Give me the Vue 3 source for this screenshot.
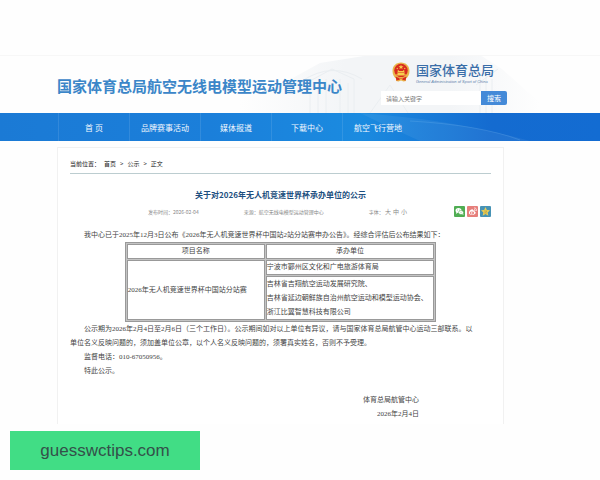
<script setup>
import { ref } from "vue";

const keyword = ref("");

const navItems = ["首 页", "品牌赛事活动", "媒体报道", "下载中心", "航空飞行营地"];
const fontSizes = ["大", "中", "小"];
const organizers = [
    "吉林省吉翔航空运动发展研究院、",
    "吉林省延边朝鲜族自治州航空运动和模型运动协会、",
    "浙江比翼智慧科技有限公司",
];
</script>

<template>
    <div class="page">
        <header class="site-header">
            <svg class="skyline" viewBox="0 0 300 58" preserveAspectRatio="xMidYMax slice" aria-hidden="true">
                <defs>
                    <linearGradient id="haze" x1="0" x2="1">
                        <stop offset="0" stop-color="#f3f5f7" stop-opacity="0" />
                        <stop offset="0.35" stop-color="#f3f5f7" />
                        <stop offset="0.7" stop-color="#f3f5f7" />
                        <stop offset="1" stop-color="#f3f5f7" stop-opacity="0" />
                    </linearGradient>
                </defs>
                <path fill="url(#haze)" d="M0 58V44L40 30 80 8 130 0 240 0 262 14 300 48V58Z" />
                <path fill="none" stroke="#eaeef1" stroke-width="1"
                    d="M70 58V26L92 14 114 24V58M78 58V30M86 58V24M100 58V24M108 58V28M62 26Q92 6 122 24M130 58L150 30 168 58M240 58V22M246 58V18M252 58V24M236 30L258 14" />
            </svg>
            <h1>国家体育总局航空无线电模型运动管理中心</h1>
            <div class="header-side">
                <a class="brand" href="#">
                    <svg class="emblem" viewBox="0 0 36 40" aria-hidden="true">
                        <path fill="#e9b64c" d="M18 1C28 1 35 8 35 18 35 25 32 30 28 33V38L23 39 18 37 13 39 8 38V33C4 30 1 25 1 18 1 8 8 1 18 1Z" />
                        <circle cx="18" cy="17" r="13.5" fill="#d92b1f" />
                        <path fill="#f6cf4e" d="M18 5L19.3 8.6H23L20 10.8 21.1 14.4 18 12.2 14.9 14.4 16 10.8 13 8.6H16.7Z" />
                        <g fill="#f6cf4e">
                            <circle cx="10.5" cy="13" r="1.3" />
                            <circle cx="25.5" cy="13" r="1.3" />
                            <circle cx="12.5" cy="17" r="1.2" />
                            <circle cx="23.5" cy="17" r="1.2" />
                            <path d="M10 21L12 18H24L26 21ZM11 22H25V25H28V27H8V25H11Z" />
                        </g>
                        <path fill="#d92b1f" d="M7 29Q18 35 29 29L27 37 22 36 18 34 14 36 9 37Z" />
                        <circle cx="18" cy="33" r="3" fill="#f0bd49" />
                        <circle cx="18" cy="33" r="1.2" fill="#d92b1f" />
                    </svg>
                    <span class="brand-text">
                        <span class="brand-name">国家体育总局</span>
                        <span class="brand-sub">General Administration of Sport of China</span>
                    </span>
                </a>
                <form class="search" @submit.prevent>
                    <input v-model="keyword" type="text" placeholder="请输入关键字" aria-label="请输入关键字" />
                    <button type="submit">搜索</button>
                </form>
            </div>
        </header>

        <nav class="main-nav">
            <svg class="nav-waves" viewBox="0 0 300 28" preserveAspectRatio="none" aria-hidden="true">
                <path fill="#ffffff" fill-opacity="0.06" d="M60 0Q150 6 230 28H120Q80 10 60 0Z" />
                <path fill="none" stroke="#8cc8f5" stroke-opacity="0.2" d="M110 8Q180 12 220 27" />
            </svg>
            <a v-for="item in navItems" :key="item" href="#">{{ item }}</a>
        </nav>

        <main class="article">
            <div class="breadcrumb">
                <span>当前位置：</span>
                <a href="#">首页</a>
                <span>&gt;</span>
                <a href="#">公示</a>
                <span>&gt;</span>
                <span>正文</span>
            </div>

            <h2>关于对2026年无人机竞速世界杯承办单位的公示</h2>

            <div class="meta">
                <span>发布时间：2026-02-04</span>
                <span>来源：航空无线电模型运动管理中心</span>
                <span class="sizes">
                    字体：
                    <button v-for="size in fontSizes" :key="size" type="button">{{ size }}</button>
                </span>
                <span class="share">
                    <button type="button" class="wechat" aria-label="微信">
                        <svg viewBox="0 0 22 22">
                            <ellipse cx="9" cy="9" rx="6" ry="5" fill="#fff" />
                            <path fill="#fff" d="M5 12L4 16 8 13Z" />
                            <ellipse cx="14" cy="13" rx="5" ry="4" fill="#fff" stroke="#50ad53" />
                            <path fill="#fff" d="M16 16L19 18 18 14Z" />
                            <g fill="#50ad53">
                                <circle cx="7" cy="8" r="0.9" />
                                <circle cx="11" cy="8" r="0.9" />
                                <circle cx="12.5" cy="12.5" r="0.7" />
                                <circle cx="15.5" cy="12.5" r="0.7" />
                            </g>
                        </svg>
                    </button>
                    <button type="button" class="weibo" aria-label="微博">
                        <svg viewBox="0 0 22 22">
                            <path fill="#fff" d="M9 7C11 6 12 7 12 9 15 8 16 9 15 11 18 12 18 14 16 16 12 19 5 18 4 15 3 12 6 8 9 7Z" />
                            <ellipse cx="10" cy="14" rx="4.2" ry="2.8" fill="#e67f7b" />
                            <circle cx="9.5" cy="14" r="1.6" fill="#fff" />
                            <path fill="none" stroke="#fff" stroke-width="1.4" d="M14 4C17 3 20 6 18.5 10M14 7C15.5 6.5 17 8 16.3 9.5" />
                        </svg>
                    </button>
                    <button type="button" class="qzone" aria-label="QQ空间">
                        <svg viewBox="0 0 22 22">
                            <path fill="#ecce55" d="M11 2L13.7 8 20 8.6 15.3 13 16.7 19.3 11 16 5.3 19.3 6.7 13 2 8.6 8.3 8Z" />
                            <path fill="none" stroke="#b9a040" stroke-width="1.2" d="M8 10H14L9 14H14" />
                        </svg>
                    </button>
                </span>
            </div>

            <div class="content">
                <p>我中心已于2025年12月3日公布《2026年无人机竞速世界杯中国站2站分站赛申办公告》。经综合评估后公布结果如下：</p>
                <table>
                    <thead>
                        <tr>
                            <th>项目名称</th>
                            <th>承办单位</th>
                        </tr>
                    </thead>
                    <tbody>
                        <tr>
                            <td rowspan="2">2026年无人机竞速世界杯中国站分站赛</td>
                            <td>宁波市鄞州区文化和广电旅游体育局</td>
                        </tr>
                        <tr>
                            <td>
                                <div v-for="name in organizers" :key="name">{{ name }}</div>
                            </td>
                        </tr>
                    </tbody>
                </table>
                <p>公示期为2026年2月4日至2月6日（三个工作日）。公示期间如对以上单位有异议，请与国家体育总局航管中心运动三部联系。以单位名义反映问题的，须加盖单位公章，以个人名义反映问题的，须署真实姓名，否则不予受理。</p>
                <p>监督电话：010-67050956。</p>
                <p>特此公示。</p>
                <div class="signature">
                    <div>体育总局航管中心</div>
                    <div>2026年2月4日</div>
                </div>
            </div>
        </main>

        <a class="site-tag" href="#">guesswctips.com</a>
    </div>
</template>

<style>
body {
    margin: 0;
    background-color: #fefefe;
}
</style>

<style scoped>
.page {
    padding: 55px 0 10px;
    font-family: "Noto Sans CJK SC", "Liberation Sans", sans-serif;
    color: #444;
}

a {
    color: inherit;
    text-decoration: none;
}

button,
input {
    border: none;
    padding: 0;
    margin: 0;
    font-family: inherit;
}

button {
    cursor: pointer;
}

.site-header {
    position: relative;
    display: flex;
    align-items: center;
    justify-content: space-between;
    height: 58px;
    padding: 0 93px 0 57px;
    border-top: 1px solid #f7f7f7;
    box-sizing: border-box;
}

.skyline {
    position: absolute;
    top: 0;
    right: 10%;
    width: 50%;
    height: 100%;
}

h1 {
    position: relative;
    margin: 2px 0 0;
    font-size: 15px;
    font-weight: 700;
    line-height: 20px;
    color: #3b86c8;
    white-space: nowrap;
}

.header-side {
    position: relative;
    width: 126px;
    margin-bottom: 4px;
}

.brand {
    display: flex;
    align-items: center;
    gap: 6px;
    padding-left: 11px;
}

.emblem {
    width: 18px;
    height: 20px;
}

.brand-text {
    display: flex;
    flex-direction: column;
    white-space: nowrap;
}

.brand-name {
    font-size: 13px;
    font-weight: 500;
    line-height: 19px;
    color: #3a6ea8;
}

.brand-sub {
    font-family: "Liberation Sans", sans-serif;
    font-size: 4px;
    font-style: italic;
    line-height: 5px;
    color: #5f83ad;
}

.search {
    display: flex;
    height: 14px;
    margin-top: 7px;
}

.search input {
    flex: 1;
    min-width: 0;
    padding-left: 5px;
    background-color: #fff;
    font-size: 6px;
    color: #555;
}

.search input::placeholder {
    color: #777;
}

.search button {
    width: 26px;
    border-radius: 0 2px 2px 0;
    background-color: #448ad8;
    color: #fff;
    font-size: 7px;
}

.main-nav {
    position: relative;
    display: flex;
    height: 28px;
    padding-left: 58px;
    background: linear-gradient(90deg, #1b7ad5 0%, #1b7fda 35%, #1b8be0 60%, #146bd0 82%, #136cd2 100%);
}

.nav-waves {
    position: absolute;
    top: 0;
    right: 0;
    width: 50%;
    height: 100%;
}

.main-nav a {
    position: relative;
    width: 71px;
    border-left: 1px solid rgba(255, 255, 255, 0.1);
    box-sizing: border-box;
    color: #f2f8fe;
    font-size: 8px;
    line-height: 29px;
    text-align: center;
}

.article {
    margin: 6px 96px 0 57px;
    padding: 10px 12px 3px;
    border: 1px solid #f1f1f1;
    border-bottom: none;
    background-color: #fff;
}

.breadcrumb {
    display: flex;
    gap: 4px;
    padding-bottom: 3px;
    border-bottom: 1px solid #bccdd0;
    font-size: 6px;
    line-height: 12px;
    color: #222;
}

h2 {
    margin: 14px 0 0;
    font-size: 8px;
    font-weight: 700;
    line-height: 14px;
    text-align: center;
    color: #1d4f80;
}

.meta {
    display: flex;
    align-items: center;
    justify-content: space-between;
    margin-top: 4px;
    padding-left: 78px;
    font-size: 5px;
    line-height: 11px;
    color: #888;
}

.sizes button {
    margin-right: 2px;
    background: none;
    color: inherit;
    font-size: 6px;
}

.share {
    display: flex;
    gap: 2px;
}

.share button {
    width: 11px;
    height: 11px;
    border-radius: 1px;
}

.share svg {
    display: block;
    width: 11px;
    height: 11px;
}

.wechat {
    background-color: #50ad53;
}

.weibo {
    background-color: #e67f7b;
}

.qzone {
    background-color: #4793b5;
}

.content {
    margin-top: 11px;
    font-family: "Liberation Serif", "Noto Sans CJK SC", serif;
    font-size: 7px;
    line-height: 14px;
}

.content p {
    margin: 0;
    padding-right: 12px;
    text-indent: 2em;
}

table {
    width: 74%;
    margin: 0 auto;
    border: 1px solid #999;
    border-collapse: separate;
    border-spacing: 1px;
    background-color: #c4c4c4;
}

th,
td {
    padding: 0;
    border: 1px solid #999;
    background-color: #fff;
    font-weight: 400;
    line-height: 13px;
    text-align: left;
}

th {
    text-align: center;
}

th:first-child {
    width: 45%;
}

td div {
    line-height: 14px;
}

.signature {
    display: flex;
    flex-direction: column;
    align-items: flex-end;
    margin-top: 15px;
    padding-right: 72px;
}

.site-tag {
    display: block;
    width: 190px;
    margin: 7px 0 0 10px;
    background-color: #41dd85;
    color: #34504a;
    font-family: "Liberation Sans", sans-serif;
    font-size: 17px;
    line-height: 39px;
    text-align: center;
}
</style>
